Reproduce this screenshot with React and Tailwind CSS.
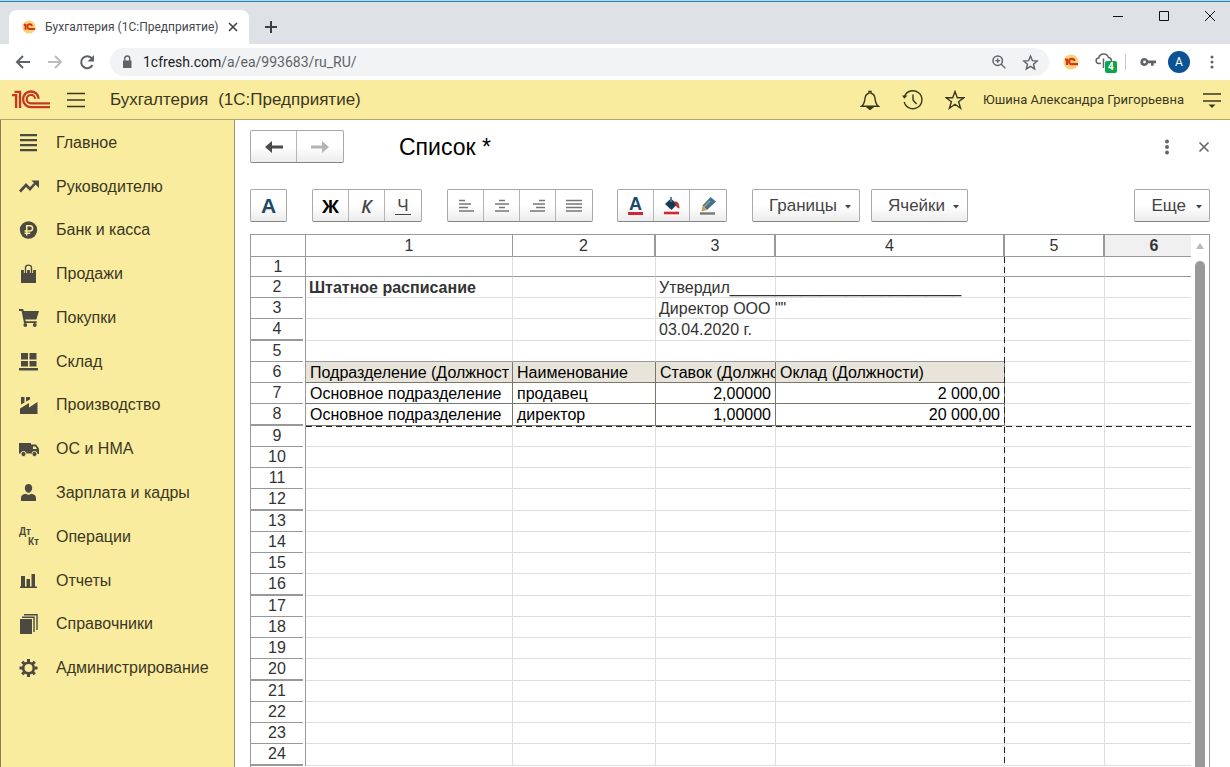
import { useState } from "react";
import { clsx } from "clsx";

const menu = [
  { title: "Главное", icon: MainIcon },
  { title: "Руководителю", icon: TrendIcon },
  { title: "Банк и касса", icon: RubleIcon },
  { title: "Продажи", icon: BagIcon },
  { title: "Покупки", icon: CartIcon },
  { title: "Склад", icon: StockIcon },
  { title: "Производство", icon: FactoryIcon },
  { title: "ОС и НМА", icon: TruckIcon },
  { title: "Зарплата и кадры", icon: PersonIcon },
  { title: "Операции", icon: DebitCreditIcon },
  { title: "Отчеты", icon: ChartIcon },
  { title: "Справочники", icon: BooksIcon },
  { title: "Администрирование", icon: GearIcon },
];

const sheet = {
  2: ["Штатное расписание", "", "Утвердил__________________________"],
  3: ["", "", 'Директор ООО ""'],
  4: ["", "", "03.04.2020 г."],
  6: ["Подразделение (Должност", "Наименование", "Ставок (Должно", "Оклад (Должности)"],
  7: ["Основное подразделение", "продавец", "2,00000", "2 000,00"],
  8: ["Основное подразделение", "директор", "1,00000", "20 000,00"],
};

const rows = Array.from({ length: 24 }, (_, i) => i + 1);
const columns = [1, 2, 3, 4, 5, 6];

/* ---------- icons ---------- */

function Icon({ children, className = "size-5", viewBox = "0 0 20 20" }) {
  return (
    <svg className={className} viewBox={viewBox} fill="currentColor" aria-hidden="true">
      {children}
    </svg>
  );
}

function MainIcon() {
  return (
    <Icon>
      <path d="M1 1h17v2.300H1zM1 6h17v2.300H1zM1 11h17v2.300H1zM1 16h17v2.300H1z" />
    </Icon>
  );
}

function TrendIcon() {
  return (
    <Icon>
      <path d="M1 14.500 7 8l4 4 5-5.500" fill="none" stroke="currentColor" strokeWidth="2.600" />
      <path d="M12.500 3.500h7.500V11z" />
    </Icon>
  );
}

function RubleIcon() {
  return (
    <Icon>
      <circle cx="9.500" cy="10" r="8.700" />
      <path
        d="M7.700 15.500V5.700h3.300a2.600 2.600 0 0 1 0 5.200H5.500M5.500 13.200h5.700"
        fill="none"
        stroke="#f9ec9f"
        strokeWidth="1.500"
      />
    </Icon>
  );
}

function BagIcon() {
  return (
    <Icon>
      <path d="M2 6h15v13H2z" />
      <path d="M6.500 9V3.500a3 2.400 0 0 1 6 0V9" fill="none" stroke="#f9ec9f" strokeWidth="3.200" />
      <path d="M6.500 9V3.500a3 2.400 0 0 1 6 0V9" fill="none" stroke="currentColor" strokeWidth="1.400" />
    </Icon>
  );
}

function CartIcon() {
  return (
    <Icon>
      <path d="M0 1h4l.8 2H20l-2.600 8.500H6.300l.4 1.800h11v1.700H5L2.600 3H0z" />
      <circle cx="6.300" cy="17" r="1.900" />
      <circle cx="15.800" cy="17" r="1.900" />
    </Icon>
  );
}

function StockIcon() {
  return (
    <Icon>
      <path d="M2 1h7v6.500H2zM10.500 1h7v6.500h-7zM2 9h7v5.500H2zM10.500 9h7v5.500h-7zM0 16h19v2.500H0z" />
    </Icon>
  );
}

function FactoryIcon() {
  return (
    <Icon>
      <path d="M1 13.500 10 8v4.500L18.500 7v12H1z" />
      <path d="M2 2h3.500v5.500L2 9.500zM7 2h4v2.500L7 6.500z" />
    </Icon>
  );
}

function TruckIcon() {
  return (
    <Icon>
      <path d="M0 4h12v10.500H0z" />
      <path d="M12 5.500h5l3 4V15h-8z" />
      <path d="M14 7.500h2.300l1.700 2.500h-4z" fill="#f9ec9f" />
      <circle cx="4.500" cy="15" r="2.600" stroke="#f9ec9f" />
      <circle cx="15.500" cy="15" r="2.600" stroke="#f9ec9f" />
    </Icon>
  );
}

function PersonIcon() {
  return (
    <Icon>
      <path d="M9.500 1C7 1 5.800 2.700 5.800 5c0 2.600 1.700 4.800 3.700 4.800S13.200 7.600 13.200 5c0-2.300-1.200-4-3.700-4z" />
      <path d="M2 18v-3c0-2.500 2-3.800 4.800-4.200 1.500 1.200 3.900 1.200 5.400 0C15 11.200 17 12.500 17 15v3z" />
    </Icon>
  );
}

function DebitCreditIcon() {
  return (
    <span className="flex h-5 w-5 flex-col text-[10px] leading-[10px] font-bold" aria-hidden="true">
      <span>Дт</span>
      <span className="self-end">Кт</span>
    </span>
  );
}

function ChartIcon() {
  return (
    <Icon>
      <path d="M1 15.500h17V17H1zM2 5h4v11H2zM7.500 8H11v8H7.500zM12.500 3H16v13h-3.500z" />
    </Icon>
  );
}

function BooksIcon() {
  return (
    <Icon>
      <path d="M1 5h12v15H1z" />
      <path d="M3 3.200h12V18M5 .8h13V16" fill="none" stroke="currentColor" strokeWidth="1.400" />
    </Icon>
  );
}

function GearIcon() {
  return (
    <Icon>
      <circle cx="9.500" cy="10" r="5.300" fill="none" stroke="currentColor" strokeWidth="2.600" />
      <path
        d="M9.500 1v3M9.500 16v3M.5 10h3M15.500 10h3M3.200 3.700l2 2M13.800 14.300l2 2M3.200 16.300l2-2M13.800 5.700l2-2"
        stroke="currentColor"
        strokeWidth="3"
      />
    </Icon>
  );
}

function Logo({ className }) {
  return (
    <svg className={className} viewBox="0 0 37 20" fill="none" stroke="#c8371f" aria-hidden="true">
      <path d="M0 6h4v12.500M2.500 2.800h5.300V18.500" strokeWidth="2.300" />
      <path d="M26 9.500a7.600 7.600 0 1 0-7.600 8.100H37" strokeWidth="2.300" />
      <path d="M22.500 9.500a4.100 4.100 0 1 0-4.100 4.500H37" strokeWidth="2.100" />
    </svg>
  );
}

function Favicon({ className }) {
  return (
    <svg className={className} viewBox="0 0 16 16" aria-hidden="true">
      <circle cx="8" cy="8" r="7.500" fill="#fbd27a" />
      <path d="M2 5.500h2V11" stroke="#d0381c" strokeWidth="2.200" fill="none" />
      <path d="M11.500 7a2.700 2.700 0 1 0-2.300 3.200H15" stroke="#d0381c" strokeWidth="2.200" fill="none" />
    </svg>
  );
}

function Caret() {
  return (
    <svg className="mt-0.5 w-1.5" viewBox="0 0 6 4" fill="#444" aria-hidden="true">
      <path d="M0 0h6L3 3.500z" />
    </svg>
  );
}

/* ---------- browser window ---------- */

function TabStrip() {
  return (
    <div className="flex h-[43px] justify-between border-t border-[#3a7ea8] bg-[#dee1e6]">
      <div className="flex pt-2 pl-[9px]">
        <div className="flex w-60 items-center rounded-t-lg bg-white pr-2.5 pl-[13px]">
          <Favicon className="size-3.5" />
          <span className="ml-[9px] flex-1 text-[12px] whitespace-nowrap text-[#45494d]">
            Бухгалтерия (1С:Предприятие)
          </span>
          <button aria-label="Закрыть вкладку">
            <svg className="size-3" viewBox="0 0 12 12" stroke="#3c4043" strokeWidth="1.600">
              <path d="m2 2 8 8M10 2l-8 8" />
            </svg>
          </button>
        </div>
        <button className="ml-3.5 flex items-center" aria-label="Новая вкладка">
          <svg className="size-4" viewBox="0 0 16 16" stroke="#3c4043" strokeWidth="2">
            <path d="M8 2v12M2 8h12" />
          </svg>
        </button>
      </div>
      <div className="flex h-7 items-center gap-[34px] pr-3.5">
        <button aria-label="Свернуть">
          <svg className="size-3" viewBox="0 0 12 12" stroke="#111">
            <path d="M1 6.500h10" />
          </svg>
        </button>
        <button aria-label="Развернуть">
          <svg className="size-3" viewBox="0 0 12 12" stroke="#111" fill="none">
            <path d="M1.500 1.500h9v9h-9z" />
          </svg>
        </button>
        <button aria-label="Закрыть">
          <svg className="size-3" viewBox="0 0 12 12" stroke="#111">
            <path d="m1 1 10 10M11 1 1 11" />
          </svg>
        </button>
      </div>
    </div>
  );
}

function AddressBar() {
  return (
    <div className="flex h-9 items-center bg-white pr-2.5 pl-3.5 text-[#5f6368]">
      <button aria-label="Назад">
        <svg className="size-[18px]" viewBox="0 0 18 18" fill="none" stroke="#5f6368" strokeWidth="2">
          <path d="M16 9H3M9 3 3 9l6 6" />
        </svg>
      </button>
      <button className="ml-3.5" aria-label="Вперед">
        <svg className="size-[18px]" viewBox="0 0 18 18" fill="none" stroke="#babcbe" strokeWidth="2">
          <path d="M2 9h13M9 3l6 6-6 6" />
        </svg>
      </button>
      <button className="ml-3.5" aria-label="Обновить">
        <svg className="size-[18px]" viewBox="0 0 18 18" fill="none" stroke="#5f6368" strokeWidth="2">
          <path d="M14.500 12A6 6 0 1 1 13.500 5" />
          <path d="M16 2v6.500H9.500z" fill="#5f6368" stroke="none" />
        </svg>
      </button>
      <div className="ml-3.5 flex h-7 flex-1 items-center rounded-full bg-[#f1f3f4] px-2.5">
        <svg className="size-3.5" viewBox="0 0 14 14" fill="#5f6368" aria-hidden="true">
          <path d="M3 5.500h8.500V13H3z" />
          <path d="M4.800 6V3.500a2.400 2.400 0 0 1 4.900 0V6" fill="none" stroke="#5f6368" strokeWidth="1.400" />
        </svg>
        <span className="ml-[9px] flex-1 text-[14px]">
          <span className="text-[#202124]">1cfresh.com</span>/a/ea/993683/ru_RU/
        </span>
        <button aria-label="Масштаб">
          <svg className="size-3.5" viewBox="0 0 14 14" fill="none" stroke="#5f6368" strokeWidth="1.500">
            <circle cx="5.700" cy="5.700" r="4.700" />
            <path d="m9 9 4.300 4.300M3.300 5.700h4.800M5.700 3.300v4.800" strokeWidth="1.300" />
          </svg>
        </button>
        <button className="ml-4" aria-label="Добавить в закладки">
          <svg className="size-[17px]" viewBox="0 0 18 18" fill="none" stroke="#5f6368" strokeWidth="1.500">
            <path d="m9 2.200 2 4.800 5.100.4-3.900 3.400 1.200 5L9 13.100l-4.400 2.700 1.200-5L1.900 7.400 7 7z" />
          </svg>
        </button>
      </div>
      <button className="ml-3.5" aria-label="1С">
        <Favicon className="size-4" />
      </button>
      <button className="relative ml-4" aria-label="Загрузки">
        <svg className="size-[18px]" viewBox="0 0 18 18" fill="none" stroke="#5f6368" strokeWidth="1.500">
          <path d="M6 10.500H4a2.800 2.800 0 0 1-.2-5.600 5 5 0 0 1 9.600-.5 3.100 3.100 0 0 1 .6 6.100h-2M8.500 5.500V15" />
        </svg>
        <span className="absolute top-2 left-2.5 rounded-xs bg-[#0fa34c] px-[3px] text-[10px] leading-3 font-bold text-white">
          4
        </span>
      </button>
      <span className="ml-3 h-4 w-px bg-[#c4c7ca]" />
      <button className="ml-3.5" aria-label="Пароли">
        <svg className="size-4" viewBox="0 0 16 16" fill="#5f6368">
          <path d="M4.500 4a4 4 0 1 0 3.700 5.300H11v2.500h2.700V9.300H16V6.600H8.200A4 4 0 0 0 4.500 4zm0 2.600a1.400 1.400 0 1 1 0 2.800 1.400 1.400 0 0 1 0-2.800z" />
        </svg>
      </button>
      <button className="ml-3 size-[22px] rounded-full bg-[#0b5394] text-[12px] text-white">A</button>
      <button className="ml-3.5" aria-label="Меню">
        <svg className="size-4" viewBox="0 0 16 16" fill="#5f6368">
          <circle cx="8" cy="3" r="1.500" />
          <circle cx="8" cy="8" r="1.500" />
          <circle cx="8" cy="13" r="1.500" />
        </svg>
      </button>
    </div>
  );
}

/* ---------- 1C ---------- */

function AppHeader() {
  return (
    <header className="flex h-10 items-center border-b border-[#b3a768] bg-[#f9ec9f] pr-2 pl-3 text-[#3b371f]">
      <Logo className="w-[38px]" />
      <button className="ml-4" aria-label="Меню функций">
        <svg className="h-4 w-5" viewBox="0 0 20 16" stroke="currentColor" strokeWidth="1.400">
          <path d="M1 1.500h18M1 8h18M1 14.500h18" />
        </svg>
      </button>
      <h1 className="ml-6 flex flex-1 gap-2.5 text-[17px]">
        <span>Бухгалтерия</span>
        <span>(1С:Предприятие)</span>
      </h1>
      <button aria-label="Оповещения">
        <svg className="size-5" viewBox="0 0 20 20" fill="none" stroke="currentColor" strokeWidth="1.400">
          <path d="M1.500 16.300c3-2.200 3-4.500 3.500-8C5.400 5.500 7 3.700 9 3.300V1.500h2v1.800c2 .4 3.600 2.200 4 5 .5 3.500.5 5.800 3.500 8z" />
          <path d="M7 17h6l-3 2.500z" fill="currentColor" />
        </svg>
      </button>
      <button className="ml-[22px]" aria-label="История">
        <svg className="size-[21px]" viewBox="0 0 21 21" fill="none" stroke="currentColor" strokeWidth="1.400">
          <path d="M2.500 7.500a9 9 0 1 1-.3 5.500M11 5.500V11l3.500 4" />
          <path d="M0 6.500h5.500L2.300 9.800z" fill="currentColor" stroke="none" />
        </svg>
      </button>
      <button className="ml-[22px]" aria-label="Избранное">
        <svg className="size-5" viewBox="0 0 20 20" fill="none" stroke="currentColor" strokeWidth="1.400">
          <path d="m10 1.500 2.300 6.200h6.500l-5.200 4 2 6.500L10 14.300l-5.600 3.900 2-6.500-5.200-4h6.500z" />
        </svg>
      </button>
      <span className="mr-[18px] ml-[18px] font-[Roboto,sans-serif] text-[13px]">
        Юшина Александра Григорьевна
      </span>
      <button aria-label="Сервис">
        <svg className="size-5" viewBox="0 0 20 20" stroke="currentColor" strokeWidth="1.400">
          <path d="M1 4h18M1 11h18" />
          <path d="M6.500 14.500h7L10 18z" fill="currentColor" stroke="none" />
        </svg>
      </button>
    </header>
  );
}

function Sidebar() {
  return (
    <nav className="w-[235px] shrink-0 border-r border-l border-r-[#9b9372] border-l-[#8b7d50] bg-[#f9ec9f]">
      <ul className="mt-px grid h-[569px] auto-rows-fr">
        {menu.map(({ title, icon: ItemIcon }) => (
          <li key={title} className="flex">
            <a href="#" className="flex flex-1 items-center gap-[17px] pl-[18px] text-[16px] text-[#3b371f]">
              <span className="text-[#4c4a40]">
                <ItemIcon />
              </span>
              {title}
            </a>
          </li>
        ))}
      </ul>
    </nav>
  );
}

function ButtonGroup({ children, className }) {
  return (
    <div
      className={clsx(
        "flex h-[33px] divide-x divide-[#b5b5b5] rounded-xs border border-[#a9a9a9] border-b-[#858585] bg-linear-to-b from-white from-50% to-[#ececec]",
        className,
      )}
    >
      {children}
    </div>
  );
}

function ToolButton({ label, children, className = "w-9", ...props }) {
  return (
    <button aria-label={label} className={clsx("flex items-center justify-center", className)} {...props}>
      {children}
    </button>
  );
}

function AlignIcon({ d }) {
  return (
    <svg className="size-4" viewBox="0 0 16 16" stroke="#777" strokeWidth="1.400" aria-hidden="true">
      <path d={d} />
    </svg>
  );
}

function FormTitle() {
  return (
    <div className="flex items-center">
      <ButtonGroup>
        <ToolButton label="Назад" className="w-[46px]">
          <svg className="w-[18px]" viewBox="0 0 18 12" fill="#4b4b4b">
            <path d="M0 6 7 0v4.500h11v3H7V12z" />
          </svg>
        </ToolButton>
        <ToolButton label="Вперед" className="w-[46px]" disabled>
          <svg className="w-[18px]" viewBox="0 0 18 12" fill="#b4b4b4">
            <path d="M18 6l-7-6v4.500H0v3h11V12z" />
          </svg>
        </ToolButton>
      </ButtonGroup>
      <h2 className="ml-[55px] flex-1 text-[23px] leading-8 text-black">Список *</h2>
      <button aria-label="Еще действия">
        <svg className="h-4 w-1.5" viewBox="0 0 6 16" fill="#666">
          <circle cx="3" cy="2.500" r="2" />
          <circle cx="3" cy="8" r="2" />
          <circle cx="3" cy="13.500" r="2" />
        </svg>
      </button>
      <button className="ml-7" aria-label="Закрыть">
        <svg className="size-3" viewBox="0 0 12 12" stroke="#666" strokeWidth="1.600">
          <path d="m1.500 1.500 9 9M10.500 1.500l-9 9" />
        </svg>
      </button>
    </div>
  );
}

function Toolbar() {
  return (
    <div className="mt-[26px] flex text-[#444]">
      <ButtonGroup>
        <ToolButton label="Шрифт" className="w-[35px]">
          <b className="text-[21px] leading-6 text-[#1c4a6b]">А</b>
        </ToolButton>
      </ButtonGroup>
      <ButtonGroup className="ml-[25px]">
        <ToolButton label="Полужирный">
          <b className="font-['Open_Sans',sans-serif] text-[18px] leading-6 text-black">Ж</b>
        </ToolButton>
        <ToolButton label="Курсив">
          <i className="font-['Open_Sans',sans-serif] text-[18px] leading-6 font-semibold">К</i>
        </ToolButton>
        <ToolButton label="Подчеркнутый">
          <span className="border-b border-[#444] px-0.5 text-[17px] leading-[17px]">Ч</span>
        </ToolButton>
      </ButtonGroup>
      <ButtonGroup className="ml-[25px]">
        <ToolButton label="По левому краю">
          <AlignIcon d="M1 2.500h6M1 6h12M1 9.500h9M1 13h15" />
        </ToolButton>
        <ToolButton label="По центру">
          <AlignIcon d="M5 2.500h6M1 6h14M5 9.500h6M1 13h14" />
        </ToolButton>
        <ToolButton label="По правому краю">
          <AlignIcon d="M9 2.500h6M3 6h12M6 9.500h9M0 13h15" />
        </ToolButton>
        <ToolButton label="По ширине">
          <AlignIcon d="M0 2.500h16M0 6h16M0 9.500h16M0 13h16" />
        </ToolButton>
      </ButtonGroup>
      <ButtonGroup className="ml-6">
        <ToolButton label="Цвет текста">
          <b className="border-b-[3px] border-[#d0253a] px-px text-[18px] leading-4 text-[#1c4a6b]">А</b>
        </ToolButton>
        <ToolButton label="Цвет фона">
          <svg className="size-[18px]" viewBox="0 0 18 18">
            <path d="M8 1.500 14 7.500 8.500 13 2 7z" fill="#163b58" />
            <path d="M8 0v5" stroke="#4b7896" strokeWidth="1.800" />
            <path d="M11 4.500c3-.5 5.500 1 5.500 7-2.500-.5-3.500-2-4-4.500z" fill="#c9302c" />
            <path d="M1 16h15" stroke="#d0253a" strokeWidth="2.600" />
          </svg>
        </ToolButton>
        <ToolButton label="Цвет рамки">
          <svg className="size-[18px]" viewBox="0 0 18 18">
            <path d="M11.500 0 17 4.500 8 13 3.500 8.500z" fill="#3f7391" />
            <path d="M3.500 8.500 8 13l-5.500 1.500z" fill="#c9a15c" />
            <path d="M5 10 11 4" stroke="#c9a15c" strokeWidth="1.200" />
            <path d="M1 16.500h15" stroke="#777" strokeWidth="2.400" />
          </svg>
        </ToolButton>
      </ButtonGroup>
      <ButtonGroup className="ml-[25px] text-[17px]">
        <ToolButton className="gap-2 pr-2 pl-4">
          Границы <Caret />
        </ToolButton>
      </ButtonGroup>
      <ButtonGroup className="ml-[11px] text-[17px]">
        <ToolButton className="gap-2 pr-2 pl-4">
          Ячейки <Caret />
        </ToolButton>
      </ButtonGroup>
      <ButtonGroup className="ml-auto text-[17px]">
        <ToolButton className="gap-2.5 pr-[7px] pl-4">
          Еще <Caret />
        </ToolButton>
      </ButtonGroup>
    </div>
  );
}

function Cell({ row, col }) {
  const inReport = row >= 6 && row <= 8 && col <= 4;
  const aboveReport = row === 5 && col <= 4;
  const numeric = row > 6 && col > 2;

  return (
    <td
      className={clsx(
        "border-b p-0 whitespace-nowrap",
        col < 6 && "border-r",
        inReport && "overflow-hidden border-[#77776c] px-1 text-black",
        !inReport && "border-r-[#dedede] px-[3px]",
        !inReport && (row === 1 || aboveReport ? "border-b-[#999]" : "border-b-[#dedede]"),
        row === 6 && inReport && "bg-[#e8e4d9]",
        row === 2 && col === 1 && "font-bold",
        numeric && "text-right",
      )}
    >
      {sheet[row]?.[col - 1]}
    </td>
  );
}

function Spreadsheet() {
  const [current] = useState(6);

  return (
    <div className="mt-3 flex min-h-0 flex-1 overflow-hidden border border-b-0 border-[#999]">
      <div className="relative flex-1">
        <table className="w-full table-fixed border-separate border-spacing-0 text-[16px] leading-[19px] text-[#333]">
          <colgroup>
            <col className="w-[55px]" />
            <col className="w-[207px]" />
            <col className="w-[143px]" />
            <col className="w-[120px]" />
            <col className="w-[229px]" />
            <col className="w-[100px]" />
            <col />
          </colgroup>
          <thead>
            <tr className="h-[22px]">
              <td className="border-r border-b border-[#999] p-0" />
              {columns.map((col) => (
                <th
                  key={col}
                  scope="col"
                  className={clsx(
                    "border-b border-[#999] p-0",
                    col === 1 && "border-r",
                    col > 1 && col < 6 && "border-r-2",
                    col === current ? "bg-[#f0f0f0] pl-3 font-bold" : "font-normal",
                  )}
                >
                  {col}
                </th>
              ))}
            </tr>
          </thead>
          <tbody>
            {rows.map((row) => (
              <tr key={row}>
                <th scope="row" className="border-r border-[#999] p-0 font-normal">
                  <div
                    className={clsx(
                      "border-[#999]",
                      row === 1 && "h-5 w-full border-b",
                      row > 1 && "w-[52px]",
                      row > 1 && (row % 4 === 0 ? "h-[22px] border-b-2" : "h-[21px] border-b"),
                    )}
                  >
                    {row}
                  </div>
                </th>
                {columns.map((col) => (
                  <Cell key={col} row={row} col={col} />
                ))}
              </tr>
            ))}
          </tbody>
        </table>
        {/* print area */}
        <div className="absolute top-[191px] right-0 left-[55px] h-px bg-[repeating-linear-gradient(to_right,#222_0_6px,transparent_6px_10px)]" />
        <div className="absolute top-[22px] bottom-0 left-[753px] w-px bg-[repeating-linear-gradient(to_bottom,#222_0_6px,transparent_6px_10px)]" />
      </div>
      <div className="flex w-[18px] flex-col items-center pt-2">
        <svg className="w-2" viewBox="0 0 8 6" fill="#bbb" aria-hidden="true">
          <path d="M4 0 8 6H0z" />
        </svg>
        <div className="mt-3 w-2.5 flex-1 rounded-t-full bg-[#999]" />
      </div>
    </div>
  );
}

export default function App() {
  return (
    <div className="flex h-screen flex-col overflow-hidden bg-white font-['Liberation_Sans',Arial,sans-serif]">
      <div className="border-t border-[#9fdcf5] font-[Roboto,'Noto_Sans',sans-serif]">
        <TabStrip />
        <AddressBar />
      </div>
      <AppHeader />
      <div className="flex min-h-0 flex-1">
        <Sidebar />
        <main className="flex min-w-0 flex-1 flex-col pt-[10px] pr-5 pl-[15px]">
          <FormTitle />
          <Toolbar />
          <Spreadsheet />
        </main>
      </div>
    </div>
  );
}
